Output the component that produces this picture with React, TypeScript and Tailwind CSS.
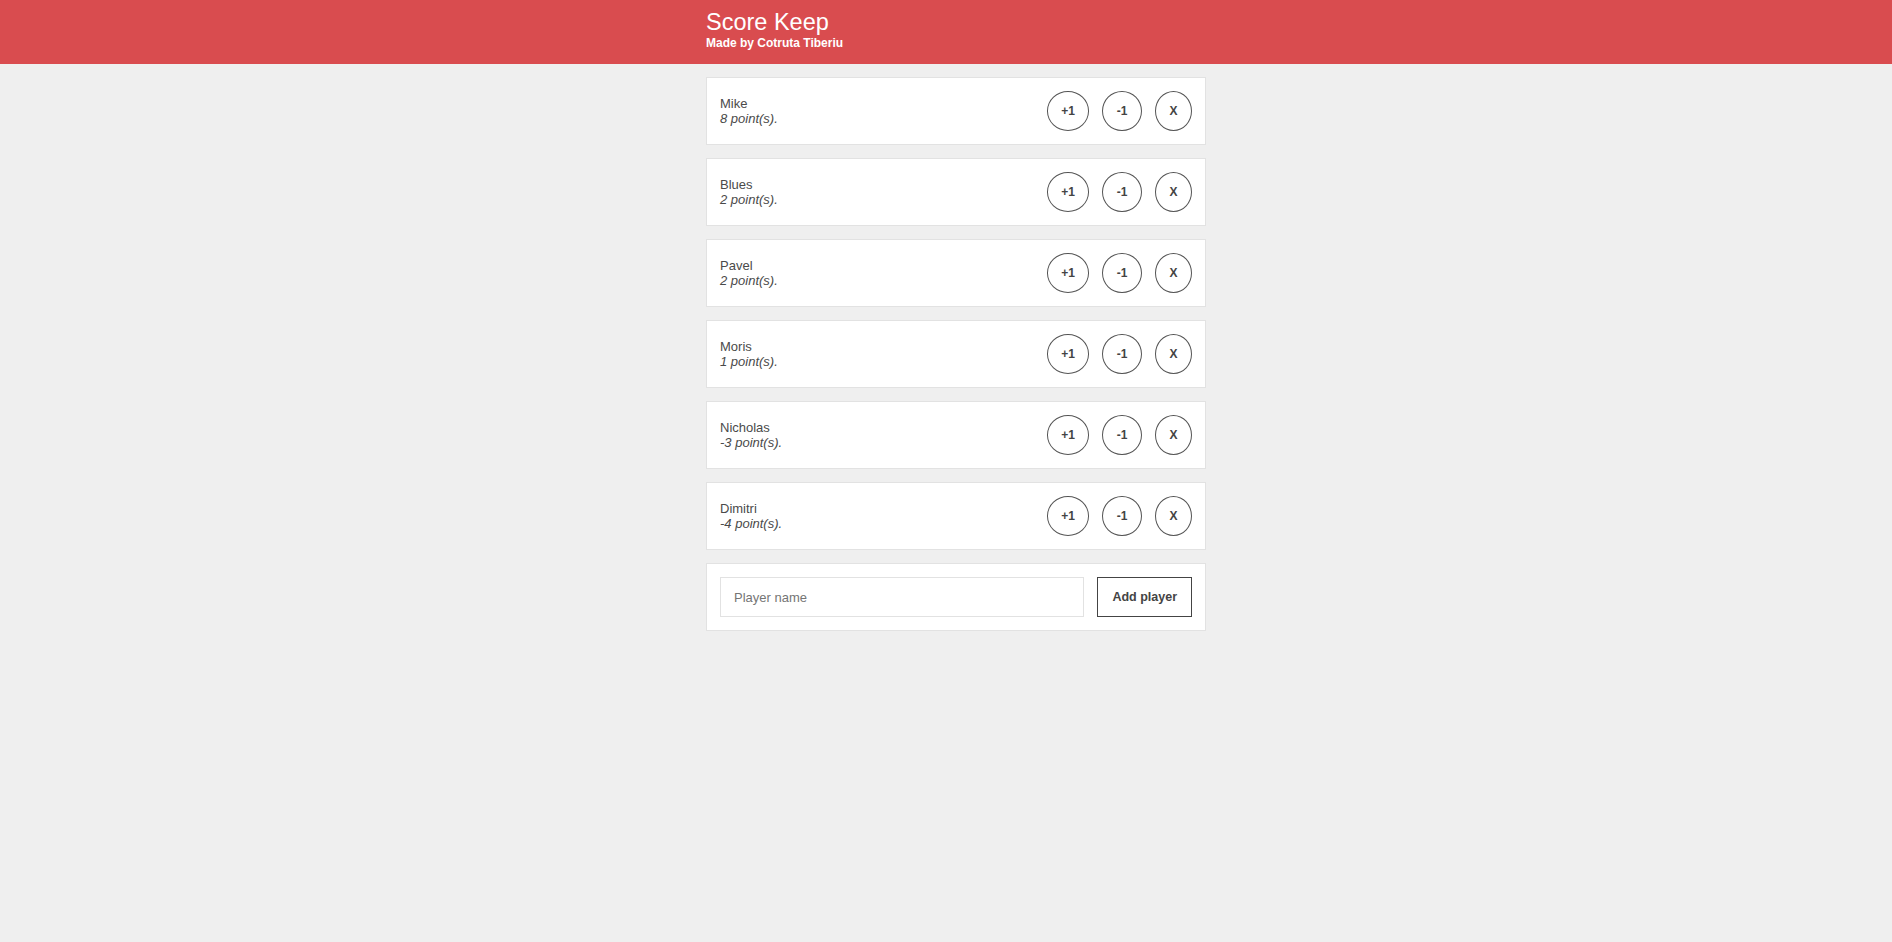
import React from "react";

const players = [
  { name: "Mike", score: 8 },
  { name: "Blues", score: 2 },
  { name: "Pavel", score: 2 },
  { name: "Moris", score: 1 },
  { name: "Nicholas", score: -3 },
  { name: "Dimitri", score: -4 },
];

const font = { fontFamily: '"Liberation Sans", Arial, sans-serif' };

function RoundBtn({ label }: { label: string }) {
  return (
    <button className="ml-[13px] h-[40px] rounded-[50%] border border-[#555] bg-white px-[13.5px] text-[12px] font-bold text-[#444] leading-none">
      {label}
    </button>
  );
}

export default function App() {
  return (
    <div className="min-h-[942px] bg-[#efefef]" style={font}>
      <header className="h-[64px] bg-[#d94c4f] text-white">
        <div className="mx-auto w-[520px] pl-[20px] pt-[9px]">
          <h1 className="text-[23.5px] leading-[27px]">Score Keep</h1>
          <p className="text-[12px] font-bold leading-[15px]">Made by Cotruta Tiberiu</p>
        </div>
      </header>
      <main className="mx-auto w-[520px] pl-[20px] pt-[13px]">
        {players.map((p) => (
          <div
            key={p.name}
            className="mb-[13px] flex items-center border border-[#e2e2e2] bg-white p-[13px]"
          >
            <div className="flex-1 text-[13px] leading-[15px] text-[#4a4a4a]">
              <div>{p.name}</div>
              <div className="italic">{p.score} point(s).</div>
            </div>
            <RoundBtn label="+1" />
            <RoundBtn label="-1" />
            <RoundBtn label="X" />
          </div>
        ))}
        <form
          className="flex items-center border border-[#e2e2e2] bg-white p-[13px]"
          onSubmit={(e) => e.preventDefault()}
        >
          <input
            placeholder="Player name"
            className="h-[40px] flex-1 border border-[#e2e2e2] px-[13px] text-[13px] text-[#444] placeholder:text-[#757575] outline-none"
          />
          <button className="ml-[13px] h-[40px] border border-[#444] bg-white px-[14px] text-[12.5px] font-bold text-[#444]">
            Add player
          </button>
        </form>
      </main>
    </div>
  );
}
